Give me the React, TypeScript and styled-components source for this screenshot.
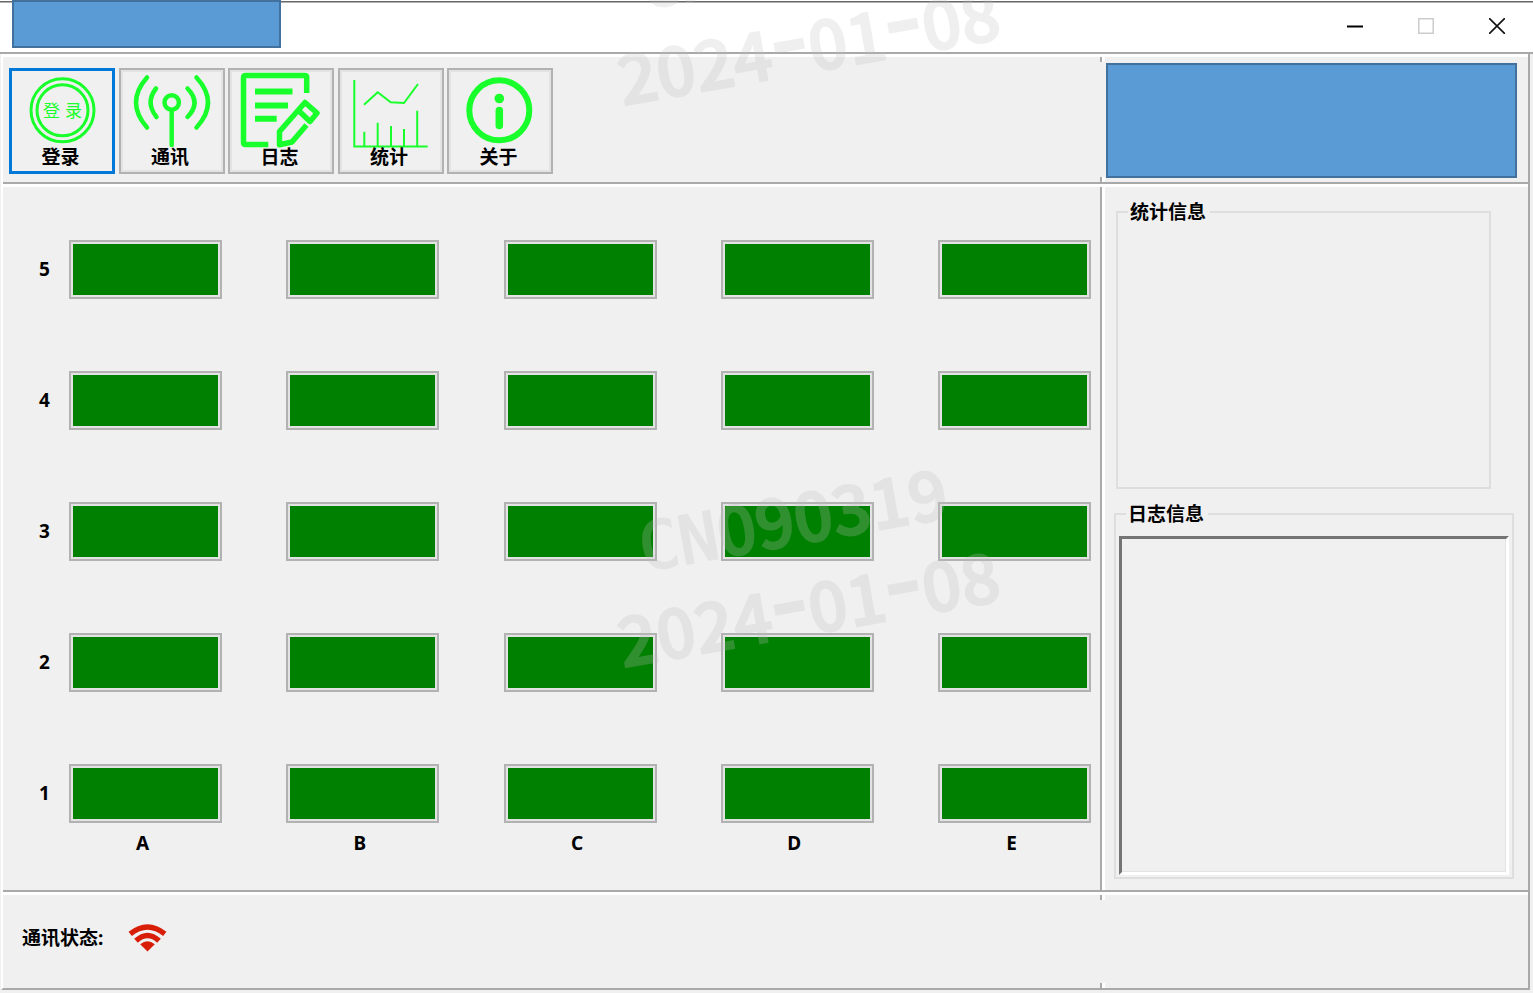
import React from "react";
import styled, { createGlobalStyle } from "styled-components";

const GREEN = "#19ff2b";
const FACE = "#f0f0f0";
const EDGE = "#a9a9a9";

const GlobalStyle = createGlobalStyle`
  *, *::before, *::after { box-sizing: border-box; }
  body {
    margin: 0;
    background: ${FACE};
    color: #000;
    font: bold 19px/24px "Noto Sans", "Noto Sans CJK SC", sans-serif;
  }
  button, textarea { font: inherit; color: inherit; }
`;

const Window = styled.div`
  position: relative;
  display: flex;
  flex-direction: column;
  min-height: 100vh;
  padding-bottom: 3px;
  overflow: hidden;
`;

const TitleBar = styled.header`
  display: flex;
  justify-content: space-between;
  align-items: flex-start;
  height: 54px;
  padding: 0 13px 0 12px;
  background: linear-gradient(#fff 1px, #686868 1px, #686868 2px, #b0b0b0 2px, #b0b0b0 3px, #fff 3px);
  border-bottom: 2px solid ${EDGE};
`;

const Banner = styled.div<{ $size: "title" | "side" }>`
  background: #5b9bd5;
  border: 2px solid #41719c;
  ${({ $size }) => ($size === "title" ? "width: 269px; height: 48px;" : "flex: 1; height: 115px;")}
`;

const WindowControls = styled.div`
  display: flex;
  gap: 24px;
  padding-top: 2px;
`;

const ControlButton = styled.button`
  display: grid;
  place-items: center;
  width: 47px;
  height: 48px;
  padding: 0;
  border: 0;
  background: transparent;
`;

const Frame = styled.div`
  flex: 1;
  display: flex;
  flex-direction: column;
  margin-right: 3px;
  margin-left: 1px;
  border-left: 2px solid #fff;
  border-right: 2px solid ${EDGE};
  border-bottom: 2px solid ${EDGE};
`;

const Row = styled.section<{ $grow?: boolean; $last?: boolean }>`
  display: grid;
  grid-template-columns: minmax(0, 1fr) 5px 423px;
  flex: ${({ $grow }) => ($grow ? "1 0 auto" : "none")};
  border-top: 3px solid #fff;
  border-bottom: ${({ $last }) => ($last ? "0" : `2px solid ${EDGE}`)};
`;

const Divider = styled.div`
  border-left: 2px solid ${EDGE};
  border-right: 3px solid #fff;
`;

const BrokenDivider = styled.div`
  display: flex;
  flex-direction: column;
  justify-content: space-between;
`;

const Tick = styled(Divider)`
  height: 5px;
`;

const Toolbar = styled.nav`
  display: flex;
  justify-content: space-between;
  align-items: flex-start;
  width: 550px;
  height: 125px;
  padding: 11px 0 0 6px;
`;

const ToolButton = styled.button<{ $active?: boolean }>`
  display: flex;
  flex-direction: column;
  align-items: center;
  width: 106px;
  height: 106px;
  padding: 0;
  border: 0;
  background: ${FACE};
  box-shadow: ${({ $active }) =>
    $active ? "inset 0 0 0 3px #0078d7" : "inset 0 0 0 2px #b2b2b2, inset 0 0 0 4px #e3e3e3"};
  line-height: 20px;
`;

const ToolIcon = styled.svg`
  display: block;
  width: 106px;
  height: 79px;
  overflow: visible;
  fill: none;
  stroke: ${GREEN};
`;

const ToolLabel = styled.span`
  position: relative;
  padding-right: 3px;
`;

const SideHeader = styled.div`
  display: flex;
  align-items: flex-start;
  padding: 6px 11px 0 1px;
`;

const Board = styled.div`
  display: grid;
  grid-template-columns: 66px repeat(4, minmax(0, 1fr)) 153px;
  grid-template-rows: repeat(4, 131px) 59px 40px;
  align-items: start;
  padding: 53px 9px 26px 0;
`;

const RowLabel = styled.span`
  padding-left: 36px;
  line-height: 58px;
`;

const ColumnLabel = styled.span`
  width: 147px;
  line-height: 40px;
  text-align: center;
`;

const Slot = styled.button`
  width: 153px;
  height: 59px;
  padding: 2px;
  border: 2px solid #b2b2b2;
  background: #008000 content-box;
  box-shadow: inset 0 0 0 2px #e3e3e3;
`;

const Sidebar = styled.aside`
  display: flex;
  flex-direction: column;
  gap: 13px;
  padding: 13px 14px 11px 9px;
`;

const Group = styled.fieldset<{ $kind: "stats" | "log" }>`
  display: flex;
  min-width: 0;
  margin: ${({ $kind }) => ($kind === "stats" ? "0 23px 0 2px" : "0")};
  padding: 10px 3px 2px;
  border: 2px solid #dedede;
  ${({ $kind }) => ($kind === "stats" ? "height: 289px;" : "flex: 1;")}
`;

const Legend = styled.legend`
  margin-left: 7px;
  padding: 0 4px 0 2px;
`;

const LogBox = styled.textarea`
  flex: 1;
  min-width: 0;
  resize: none;
  outline: 0;
  background: ${FACE};
  border: 3px solid;
  border-color: #747474 #fff #fff #747474;
  box-shadow: inset -1px -1px 0 #e3e3e3;
`;

const StatusBar = styled.footer`
  display: flex;
  align-items: center;
  gap: 25px;
  height: 93px;
  padding: 0 0 7px 19px;
`;

const Watermark = styled.div<{ $top: number }>`
  position: absolute;
  top: ${({ $top }) => $top}px;
  left: 600px;
  width: 400px;
  color: #c0c0c0;
  opacity: 0.25;
  font: 500 68px/91px "Noto Sans CJK SC", sans-serif;
  -webkit-text-stroke: 2px #c0c0c0;
  text-align: center;
  white-space: nowrap;
  transform: rotate(-10deg);
  pointer-events: none;
`;

const Dash = styled.span`
  display: inline-block;
  width: 38px;
  font-size: 106px;
  line-height: 0;
`;

const Prefix = styled.span`
  font-family: "DejaVu Sans Mono", monospace;
  font-size: 66px;
  line-height: 0;
`;

const LoginIcon = () => (
  <ToolIcon viewBox="0 0 106 79" strokeWidth="3">
    <circle cx="53.5" cy="42.3" r="31.5" />
    <circle cx="53.5" cy="42.3" r="25.5" />
    <text x="34" y="49" fontSize="17" fontWeight="400" fill={GREEN} stroke="none">登</text>
    <text x="56" y="49" fontSize="17" fontWeight="400" fill={GREEN} stroke="none">录</text>
  </ToolIcon>
);

const SignalIcon = () => (
  <ToolIcon viewBox="0 0 106 79" strokeWidth="4.5" strokeLinecap="round">
    <circle cx="52.7" cy="34.5" r="7.2" />
    <path d="M52.7 43V77" />
    <path d="M37 20.5Q26 34.5 37.5 49M28 9.5Q6 34.5 28 59.5" />
    <path d="M68.5 20.5Q82.5 34.5 68.5 49M77.5 9.5Q100.5 34.5 77.5 59.5" />
  </ToolIcon>
);

const LogIcon = () => (
  <ToolIcon viewBox="0 0 106 79" strokeWidth="5.5" strokeLinejoin="round">
    <path d="M78.7 25V9.3Q78.7 7.5 76.7 7.5H17.5Q15.5 7.5 15.5 9.5V74.5Q15.5 76.5 17.5 76.5H40.3" />
    <path d="M27 23.5H64.5M27 37.5H60M27 50.7H48.7" strokeWidth="6" />
    <path d="M78.5 57L64 74L51.5 76.8V63.5L77 34.5L89 45L82 53.5L70.5 42.5" strokeWidth="5.5" />
  </ToolIcon>
);

const ChartIcon = () => (
  <ToolIcon viewBox="0 0 106 79" strokeWidth="2">
    <path d="M16.3 12V78.5H89.7" />
    <path d="M26 36.7L39.7 24.3L52.7 34.3L66 35L80 16" />
    <path d="M26.3 63.7V78M39.7 54.7V78M53 58V78M66 61V78M79.2 42.7V78" />
  </ToolIcon>
);

const InfoIcon = () => (
  <ToolIcon viewBox="0 0 106 79" strokeWidth="6">
    <circle cx="52.3" cy="42.3" r="30" />
    <circle cx="52.3" cy="30.5" r="4.8" fill={GREEN} stroke="none" />
    <path d="M52.3 42.5V57.5" strokeWidth="7.5" strokeLinecap="round" />
  </ToolIcon>
);

const WifiIcon = () => (
  <svg width="40" height="30" viewBox="0 0 40 30" fill="none" stroke="#d81e06" strokeWidth="5.4" aria-hidden="true">
    <path d="M2.2 10.9Q19.5 -2.8 36.8 10.9" />
    <path d="M8 17.8Q19.5 7.2 31 17.8" />
    <path d="M12.2 21.2Q19.5 15.4 26.8 21.2L19.5 28.6Z" fill="#d81e06" stroke="none" />
  </svg>
);

const tools = [
  { label: "登录", Icon: LoginIcon },
  { label: "通讯", Icon: SignalIcon },
  { label: "日志", Icon: LogIcon },
  { label: "统计", Icon: ChartIcon },
  { label: "关于", Icon: InfoIcon },
];
const columns = ["A", "B", "C", "D", "E"];
const rows = [5, 4, 3, 2, 1];

const Ticks = () => (
  <BrokenDivider>
    <Tick />
    <Tick />
  </BrokenDivider>
);

const Stamp = ({ top }: { top: number }) => (
  <Watermark $top={top} aria-hidden="true">
    <div><Prefix>CN</Prefix>090319</div>
    <div>2024<Dash>-</Dash>01<Dash>-</Dash>08</div>
  </Watermark>
);

export default function App() {
  return (
    <Window>
      <GlobalStyle />
      <TitleBar>
        <Banner $size="title" />
        <WindowControls>
          <ControlButton aria-label="最小化">
            <svg width="16" height="16" stroke="#000" strokeWidth="2"><path d="M0 8.5H16" /></svg>
          </ControlButton>
          <ControlButton aria-label="最大化" disabled>
            <svg width="16" height="16" fill="none" stroke="#ccc" strokeWidth="1.5"><path d="M.8 .8H15.2V15.2H.8Z" /></svg>
          </ControlButton>
          <ControlButton aria-label="关闭">
            <svg width="16" height="16" stroke="#111" strokeWidth="1.6"><path d="M0 0L16 16M16 0L0 16" /></svg>
          </ControlButton>
        </WindowControls>
      </TitleBar>
      <Frame>
        <Row>
          <Toolbar>
            {tools.map(({ label, Icon }, i) => (
              <ToolButton key={label} $active={i === 0}>
                <Icon />
                <ToolLabel>{label}</ToolLabel>
              </ToolButton>
            ))}
          </Toolbar>
          <Ticks />
          <SideHeader>
            <Banner $size="side" />
          </SideHeader>
        </Row>
        <Row $grow>
          <Board>
            {rows.map((row) => (
              <React.Fragment key={row}>
                <RowLabel>{row}</RowLabel>
                {columns.map((col) => (
                  <Slot key={col} aria-label={`${col}${row}`} />
                ))}
              </React.Fragment>
            ))}
            <span />
            {columns.map((col) => (
              <ColumnLabel key={col}>{col}</ColumnLabel>
            ))}
          </Board>
          <Divider />
          <Sidebar>
            <Group $kind="stats">
              <Legend>统计信息</Legend>
            </Group>
            <Group $kind="log">
              <Legend>日志信息</Legend>
              <LogBox aria-label="日志信息" readOnly />
            </Group>
          </Sidebar>
        </Row>
        <Row $last>
          <StatusBar>
            <span>通讯状态:</span>
            <WifiIcon />
          </StatusBar>
          <Ticks />
        </Row>
      </Frame>
      <Stamp top={-93} />
      <Stamp top={469} />
    </Window>
  );
}
